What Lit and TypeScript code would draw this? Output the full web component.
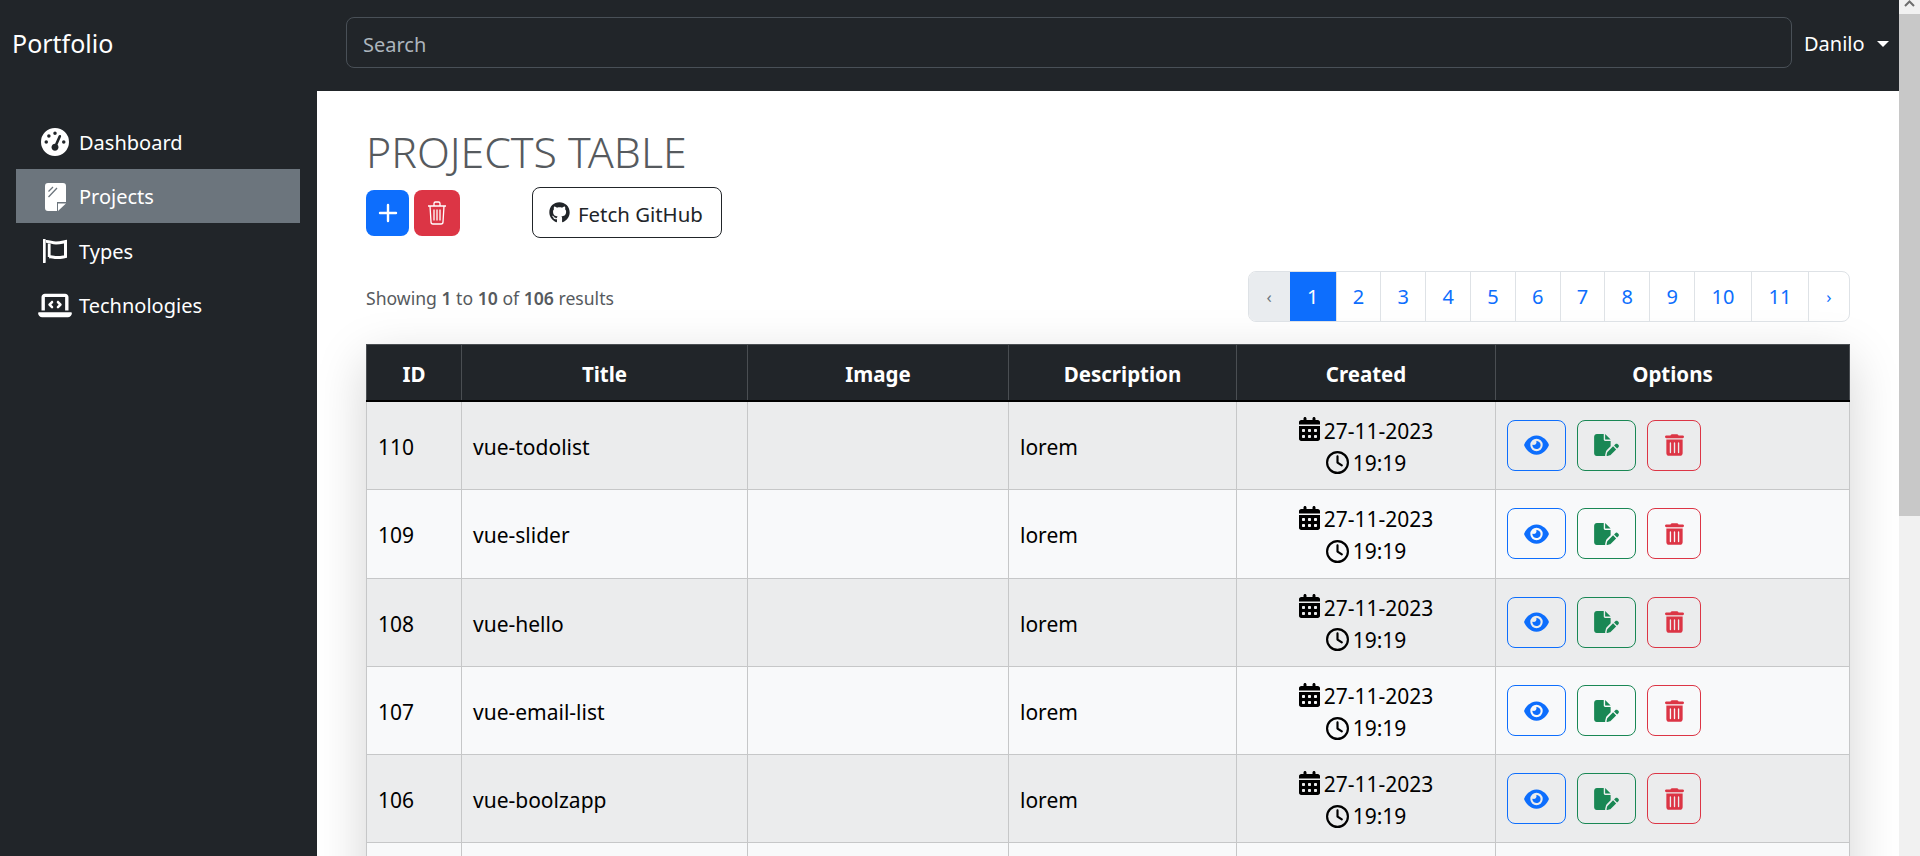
import { LitElement, html, css, svg } from 'lit';
import { customElement } from 'lit/decorators.js';

const icon = (box: string, d: string, cls = '') =>
  html`<svg class="fa ${cls}" viewBox="${box}" fill="currentColor"><path d="${d}"></path></svg>`;

const GAUGE = 'M0 256a256 256 0 1 1 512 0A256 256 0 1 1 0 256zM288 96a32 32 0 1 0 -64 0 32 32 0 1 0 64 0zM256 416c35.3 0 64-28.7 64-64c0-17.4-6.9-33.1-18.1-44.6L366 161.7c5.3-12.1-.2-26.3-12.3-31.6s-26.3 .2-31.6 12.3L257.9 288c-.6 0-1.3 0-1.9 0c-35.3 0-64 28.7-64 64s28.7 64 64 64zM176 144a32 32 0 1 0 -64 0 32 32 0 1 0 64 0zM96 288a32 32 0 1 0 0-64 32 32 0 1 0 0 64zm352-32a32 32 0 1 0 -64 0 32 32 0 1 0 64 0z';
const LAPTOP = 'M64 96c0-35.3 28.7-64 64-64H512c35.3 0 64 28.7 64 64V352H512V96H128V352H64V96zM0 403.2C0 392.6 8.6 384 19.2 384H620.8c10.6 0 19.2 8.6 19.2 19.2c0 42.4-34.4 76.8-76.8 76.8H76.8C34.4 480 0 445.6 0 403.2zM281 209l-31 31 31 31c9.4 9.4 9.4 24.6 0 33.9s-24.6 9.4-33.9 0l-48-48c-9.4-9.4-9.4-24.6 0-33.9l48-48c9.4-9.4 24.6-9.4 33.9 0s9.4 24.6 0 33.9zM393 175l48 48c9.4 9.4 9.4 24.6 0 33.9l-48 48c-9.4 9.4-24.6 9.4-33.9 0s-9.4-24.6 0-33.9l31-31-31-31c-9.4-9.4-9.4-24.6 0-33.9s24.6-9.4 33.9 0z';
const GITHUB = 'M165.9 397.4c0 2-2.3 3.6-5.2 3.6-3.3 0-5.6-1.6-5.6-3.6 0-2 2.3-3.6 5.2-3.6 3-.3 5.6 1.3 5.6 3.6zm-31.1-4.5c-.7 2 1.3 4.3 4.3 4.9 2.6 1 5.6 0 6.2-2s-1.3-4.3-4.3-5.2c-2.6-.7-5.5.3-6.2 2.3zm44.2-1.7c-2.9.7-4.9 2.6-4.6 4.9.3 2 2.9 3.3 5.9 2.6 2.9-.7 4.9-2.6 4.6-4.6-.3-1.9-3-3.2-5.9-2.9zM244.8 8C106.1 8 0 113.3 0 252c0 110.9 69.8 205.8 169.5 239.2 12.8 2.3 17.3-5.6 17.3-12.1 0-6.2-.3-40.4-.3-61.4 0 0-70 15-84.7-29.8 0 0-11.4-29.1-27.8-36.6 0 0-22.9-15.7 1.6-15.4 0 0 24.9 2 38.6 25.8 21.9 38.6 58.6 27.5 72.9 20.9 2.3-16 8.8-27.1 16-33.7-55.9-6.2-112.3-14.3-112.3-110.5 0-27.5 7.6-41.3 23.6-58.9-2.6-6.5-11.1-33.3 2.6-67.9 20.9-6.5 69 27 69 27 20-5.6 41.5-8.5 62.8-8.5s42.8 2.9 62.8 8.5c0 0 48.1-33.6 69-27 13.7 34.7 5.2 61.4 2.6 67.9 16 17.7 25.8 31.5 25.8 58.9 0 96.5-58.9 104.2-114.8 110.5 9.2 7.9 17 22.9 17 46.4 0 33.7-.3 75.4-.3 83.6 0 6.5 4.6 14.4 17.3 12.1C428.2 457.8 496 362.9 496 252 496 113.3 383.5 8 244.8 8z';
const EYE = 'M288 32c-80.8 0-145.5 36.8-192.6 80.6C48.6 156 17.3 208 2.5 243.7c-3.3 7.9-3.3 16.7 0 24.6C17.3 304 48.6 356 95.4 399.4C142.5 443.2 207.2 480 288 480s145.5-36.8 192.6-80.6c46.8-43.5 78.1-95.4 93-131.1c3.3-7.9 3.3-16.7 0-24.6c-14.9-35.7-46.2-87.7-93-131.1C433.5 68.8 368.8 32 288 32zM144 256a144 144 0 1 1 288 0 144 144 0 1 1 -288 0zm144-64c0 35.3-28.7 64-64 64c-7.1 0-13.9-1.2-20.3-3.3c-5.5-1.8-11.9 1.6-11.7 7.4c.3 6.9 1.3 13.8 3.2 20.7c13.7 51.2 66.4 81.6 117.6 67.9s81.6-66.4 67.9-117.6c-11.1-41.5-47.8-69.4-88.6-71.1c-5.8-.2-9.2 6.1-7.4 11.7c2.1 6.4 3.3 13.2 3.3 20.3z';
const FILE_PEN = 'M0 64C0 28.7 28.7 0 64 0H224V128c0 17.7 14.3 32 32 32H384V285.7l-86.8 86.8c-10.3 10.3-17.5 23.1-21 37.2l-18.7 74.9c-2.3 9.2-1.8 18.8 1.3 27.5H64c-35.3 0-64-28.7-64-64V64zm384 64H256V0L384 128zM549.8 235.7l14.4 14.4c15.6 15.6 15.6 40.9 0 56.6l-29.4 29.4-71-71 29.4-29.4c15.6-15.6 40.9-15.6 56.6 0zM311.9 417L441.1 287.8l71 71L382.9 487.9c-4.1 4.1-9.2 7-14.9 8.4l-60.1 15c-5.5 1.4-11.2-.2-15.2-4.2s-5.6-9.7-4.2-15.2l15-60.1c1.4-5.6 4.3-10.8 8.4-14.9z';
const TRASH = 'M135.2 17.7C140.6 6.8 151.7 0 163.8 0H284.2c12.1 0 23.2 6.8 28.6 17.7L320 32h96c17.7 0 32 14.3 32 32s-14.3 32-32 32H32C14.3 96 0 81.7 0 64S14.3 32 32 32h96l7.2-14.3zM32 128H416V448c0 35.3-28.7 64-64 64H96c-35.3 0-64-28.7-64-64V128zm96 64c-8.8 0-16 7.2-16 16V432c0 8.8 7.2 16 16 16s16-7.2 16-16V208c0-8.8-7.2-16-16-16zm96 0c-8.8 0-16 7.2-16 16V432c0 8.8 7.2 16 16 16s16-7.2 16-16V208c0-8.8-7.2-16-16-16zm96 0c-8.8 0-16 7.2-16 16V432c0 8.8 7.2 16 16 16s16-7.2 16-16V208c0-8.8-7.2-16-16-16z';
const CALENDAR = 'M128 0c17.7 0 32 14.3 32 32V64H288V32c0-17.7 14.3-32 32-32s32 14.3 32 32V64h48c26.5 0 48 21.5 48 48v48H0V112C0 85.5 21.5 64 48 64H96V32c0-17.7 14.3-32 32-32zM0 192H448V464c0 26.5-21.5 48-48 48H48c-26.5 0-48-21.5-48-48V192zm64 80v32c0 8.8 7.2 16 16 16h32c8.8 0 16-7.2 16-16V272c0-8.8-7.2-16-16-16H80c-8.8 0-16 7.2-16 16zm128 0v32c0 8.8 7.2 16 16 16h32c8.8 0 16-7.2 16-16V272c0-8.8-7.2-16-16-16H208c-8.8 0-16 7.2-16 16zm144-16c-8.8 0-16 7.2-16 16v32c0 8.8 7.2 16 16 16h32c8.8 0 16-7.2 16-16V272c0-8.8-7.2-16-16-16H336zM64 400v32c0 8.8 7.2 16 16 16h32c8.8 0 16-7.2 16-16V400c0-8.8-7.2-16-16-16H80c-8.8 0-16 7.2-16 16zm144-16c-8.8 0-16 7.2-16 16v32c0 8.8 7.2 16 16 16h32c8.8 0 16-7.2 16-16V400c0-8.8-7.2-16-16-16H208zm112 16v32c0 8.8 7.2 16 16 16h32c8.8 0 16-7.2 16-16V400c0-8.8-7.2-16-16-16H336c-8.8 0-16 7.2-16 16z';
const CLOCK = 'M464 256A208 208 0 1 1 48 256a208 208 0 1 1 416 0zM0 256a256 256 0 1 0 512 0A256 256 0 1 0 0 256zM232 120V256c0 8 4 15.5 10.7 20l96 64c11 7.4 25.9 4.4 33.3-6.7s4.4-25.9-6.7-33.3L280 243.2V120c0-13.3-10.7-24-24-24s-24 10.7-24 24z';

const STICKY = svg`<svg class="fa sticky" viewBox="0 0 21 28">
  <path fill="currentColor" d="M3 0h15a3 3 0 0 1 3 3v16H12v9H3a3 3 0 0 1-3-3V3a3 3 0 0 1 3-3z"></path>
  <path fill="currentColor" d="M13 20.500h8L13 28z"></path>
  <path d="M3.500 8.500L8 4M3.500 14L12 5" stroke="#6c757d" stroke-width="1.300" fill="none"></path>
</svg>`;
const FLAG = svg`<svg class="fa flag" viewBox="0 0 25 24" fill="none" stroke="currentColor">
  <path d="M1.300 1v22" stroke-width="2.800" stroke-linecap="round"></path>
  <path d="M3 2.500c3-.5 6 1.500 10 1.500s7-1 9.500-1.500v15c-3 .5-6 1.500-9.500 1s-5-1-7-.5" stroke-width="3"></path>
  <path d="M6.200 4.500v13.500" stroke-width="2.800"></path>
</svg>`;

const NAV = [
  { label: 'Dashboard', glyph: icon('0 0 512 512', GAUGE, 'gauge') },
  { label: 'Projects', glyph: STICKY, active: true },
  { label: 'Types', glyph: FLAG },
  { label: 'Technologies', glyph: icon('0 0 640 512', LAPTOP, 'laptop') },
];

const ROWS = [
  ['110', 'vue-todolist'],
  ['109', 'vue-slider'],
  ['108', 'vue-hello'],
  ['107', 'vue-email-list'],
  ['106', 'vue-boolzapp'],
];

@customElement('app-root')
export class AppRoot extends LitElement {
  static override styles = css`
    :host {
      display: block;
      height: 856px;
      overflow: hidden;
      font-family: 'Noto Sans', sans-serif;
      font-size: 20px;
      color: #000;
    }
    .page { display: flex; height: 856px; }
    .content { flex: 1; min-width: 0; display: flex; flex-direction: column; }
    .fa { display: block; }

    /* fake browser scrollbar */
    .scrollbar { width: 21px; background: #f1f1f1; display: flex; flex-direction: column; align-items: center; }
    .scrollbar .arrow { height: 14px; width: 21px; display: flex; align-items: flex-start; justify-content: center; }
    .scrollbar .thumb { width: 21px; height: 502px; background: #c8c8c8; }

    .navbar { height: 91px; box-sizing: border-box; padding-bottom: 6px; background: #212529; display: flex; align-items: center; color: #fff; }
    .brand { width: 346px; padding-left: 12px; box-sizing: border-box; font-size: 25px; }
    .search {
      width: 1446px; height: 51px; box-sizing: border-box; border: 1px solid #495057; border-radius: 8px;
      display: flex; align-items: center; padding: 3px 0 0 16px; color: #adb5bd;
    }
    .user { margin-left: 12px; display: flex; align-items: center; padding-top: 2px; }
    .caret { width: 0; height: 0; margin-left: 12px; border-top: 6px solid #fff; border-left: 6px solid transparent; border-right: 6px solid transparent; }

    .body { flex: 1; display: flex; min-height: 0; }
    .sidebar { width: 317px; background: #212529; padding-top: 23px; box-sizing: border-box; }
    .nav-item { display: flex; align-items: center; height: 54px; box-sizing: border-box; margin: 0 17px 0.500px 16px; padding: 2px 0 0 15px; color: #fff; }
    .nav-item.active { background: #6c757d; }
    .slot { width: 48px; display: flex; justify-content: center; }
    .gauge { width: 28px; height: 28px; }
    .sticky { width: 21px; height: 28px; }
    .flag { width: 25px; height: 24px; }
    .laptop { width: 34px; height: 27px; }

    .main { flex: 1; background: #fff; padding: 0 49px; min-width: 0; }
    h1 { margin: 37px 0 0; height: 48px; line-height: 48px; font-size: 42.800px; font-weight: 300; color: #565a5e; }
    .toolbar { display: flex; align-items: center; margin-top: 11px; height: 51px; }
    .btn-sq { height: 46px; border-radius: 8px; display: flex; align-items: center; justify-content: center; color: #fff; }
    .add { width: 43px; background: #0d6efd; }
    .add svg { width: 20px; height: 20px; }
    .bulk { width: 46px; margin-left: 5px; background: #dc3545; }
    .bulk svg { width: 20px; height: 24px; }
    .fetch {
      margin-left: 72px; height: 51px; width: 190px; box-sizing: border-box; border: 1px solid #212529; border-radius: 8px;
      display: flex; align-items: center; gap: 8px; padding: 2px 0 0 16px; color: #212529; font-size: 20.400px;
    }
    .fetch svg { width: 21px; height: 21px; margin-top: -2px; }

    .pager-row { display: flex; align-items: center; justify-content: space-between; margin-top: 33px; height: 51px; }
    .showing { font-size: 17.600px; color: #565a5e; padding-top: 2px; }
    .showing b { font-weight: 600; }
    .pagination { display: flex; height: 51px; border: 1px solid #dee2e6; border-radius: 8px; box-sizing: border-box; overflow: hidden; }
    .page-link { display: flex; align-items: center; justify-content: center; width: 44.800px; box-sizing: border-box; border-left: 1px solid #dee2e6; color: #0d6efd; }
    .page-link:first-child { border-left: 0; }
    .page-link.wide { width: 57px; }
    .page-link.edge { width: 41px; font-size: 17px; }
    .page-link.prev { background: #e9ecef; color: #6c757d; width: 41px; }
    .page-link.current { background: #0d6efd; color: #fff; border-left: 0; margin: -1px 0; width: 46px; }

    .table-wrap { margin-top: 22px; box-shadow: 0 16px 48px rgba(0, 0, 0, 0.175); }
    table { width: 100%; table-layout: fixed; border-collapse: collapse; font-size: 21px; }
    th { height: 56px; box-sizing: border-box; background: #212529; color: #fff; font-weight: 700; font-size: 20.500px; border: 1px solid #4a4e52; border-bottom: 2px solid #000; padding: 3px 0 0; }
    td { height: 88.300px; padding: 0 11px; box-sizing: border-box; border: 1px solid #c6c7c8; vertical-align: middle; }
    tbody tr:first-child td { height: 89.300px; }
    td.t { padding-top: 3px; }
    tbody tr:nth-child(odd) td { background: #ebeced; }
    tbody tr:nth-child(even) td { background: #f8f9fa; }
    .line { display: flex; align-items: center; justify-content: center; gap: 4px; line-height: 32px; }
    .line svg { height: 23px; width: 23px; }
    .line .cal { width: 21px; height: 24px; margin-top: -3px; }
    .actions { display: flex; gap: 11px; }
    .act {
      height: 51px; width: 59px; box-sizing: border-box; border: 1px solid; border-radius: 8px; display: flex; align-items: center; justify-content: center;
    }
    .act.view { color: #0d6efd; }
    .act.view svg { width: 25px; height: 22px; }
    .act.edit { color: #198754; }
    .act.edit svg { width: 25px; height: 22px; }
    .act.del { color: #dc3545; width: 54px; }
    .act.del svg { width: 19px; height: 22px; }
  `;

  private renderPager() {
    const pages = [1, 2, 3, 4, 5, 6, 7, 8, 9, 10, 11];
    return html`
      <div class="pagination">
        <div class="page-link edge prev">‹</div>
        ${pages.map(
          (p) => html`<div class="page-link ${p === 1 ? 'current' : ''} ${p > 9 ? 'wide' : ''}">${p}</div>`
        )}
        <div class="page-link edge">›</div>
      </div>
    `;
  }

  private renderRow(row: string[]) {
    return html`
      <tr>
        <td class="t">${row[0]}</td>
        <td class="t">${row[1]}</td>
        <td></td>
        <td class="t">lorem</td>
        <td class="t">
          <div class="line">${icon('0 0 448 512', CALENDAR, 'cal')}27-11-2023</div>
          <div class="line">${icon('0 0 512 512', CLOCK)}19:19</div>
        </td>
        <td>
          <div class="actions">
            <div class="act view">${icon('0 0 576 512', EYE)}</div>
            <div class="act edit">${icon('0 0 576 512', FILE_PEN)}</div>
            <div class="act del">${icon('0 0 448 512', TRASH)}</div>
          </div>
        </td>
      </tr>
    `;
  }

  override render() {
    return html`
      <div class="page">
        <div class="content">
          <header class="navbar">
            <div class="brand">Portfolio</div>
            <div class="search">Search</div>
            <div class="user">Danilo<span class="caret"></span></div>
          </header>
          <div class="body">
            <nav class="sidebar">
              ${NAV.map(
                (n) => html`<div class="nav-item ${n.active ? 'active' : ''}"><span class="slot">${n.glyph}</span>${n.label}</div>`
              )}
            </nav>
            <main class="main">
              <h1>PROJECTS TABLE</h1>
              <div class="toolbar">
                <div class="btn-sq add">
                  <svg viewBox="0 0 20 20"><path d="M10 2v16M2 10h16" stroke="currentColor" stroke-width="2.400" stroke-linecap="round"></path></svg>
                </div>
                <div class="btn-sq bulk">
                  <svg viewBox="0 0 20 24" fill="none" stroke="currentColor" stroke-width="1.300">
                    <path d="M1 5h18M7 5V2.500a1.500 1.500 0 0 1 1.500-1.500h3a1.500 1.500 0 0 1 1.500 1.500V5M3 5l1 16a2 2 0 0 0 2 2h8a2 2 0 0 0 2-2l1-16M7 8.500v11M10 8.500v11M13 8.500v11"></path>
                  </svg>
                </div>
                <div class="fetch">${icon('0 0 496 512', GITHUB)}Fetch GitHub</div>
              </div>
              <div class="pager-row">
                <div class="showing">Showing <b>1</b> to <b>10</b> of <b>106</b> results</div>
                ${this.renderPager()}
              </div>
              <div class="table-wrap">
                <table>
                  <colgroup>
                    <col style="width:95px" /><col style="width:286px" /><col style="width:261px" />
                    <col style="width:228px" /><col style="width:259px" /><col />
                  </colgroup>
                  <thead>
                    <tr><th>ID</th><th>Title</th><th>Image</th><th>Description</th><th>Created</th><th>Options</th></tr>
                  </thead>
                  <tbody>
                    ${ROWS.map((r) => this.renderRow(r))}
                    <tr><td></td><td></td><td></td><td></td><td></td><td></td></tr>
                  </tbody>
                </table>
              </div>
            </main>
          </div>
        </div>
        <div class="scrollbar">
          <div class="arrow">
            <svg width="11" height="7" viewBox="0 0 11 7"><path d="M1 6l4.500-4.500L10 6" stroke="#6e6e6e" stroke-width="2" fill="none"></path></svg>
          </div>
          <div class="thumb"></div>
        </div>
      </div>
    `;
  }
}

declare global {
  interface HTMLElementTagNameMap {
    'app-root': AppRoot;
  }
}
